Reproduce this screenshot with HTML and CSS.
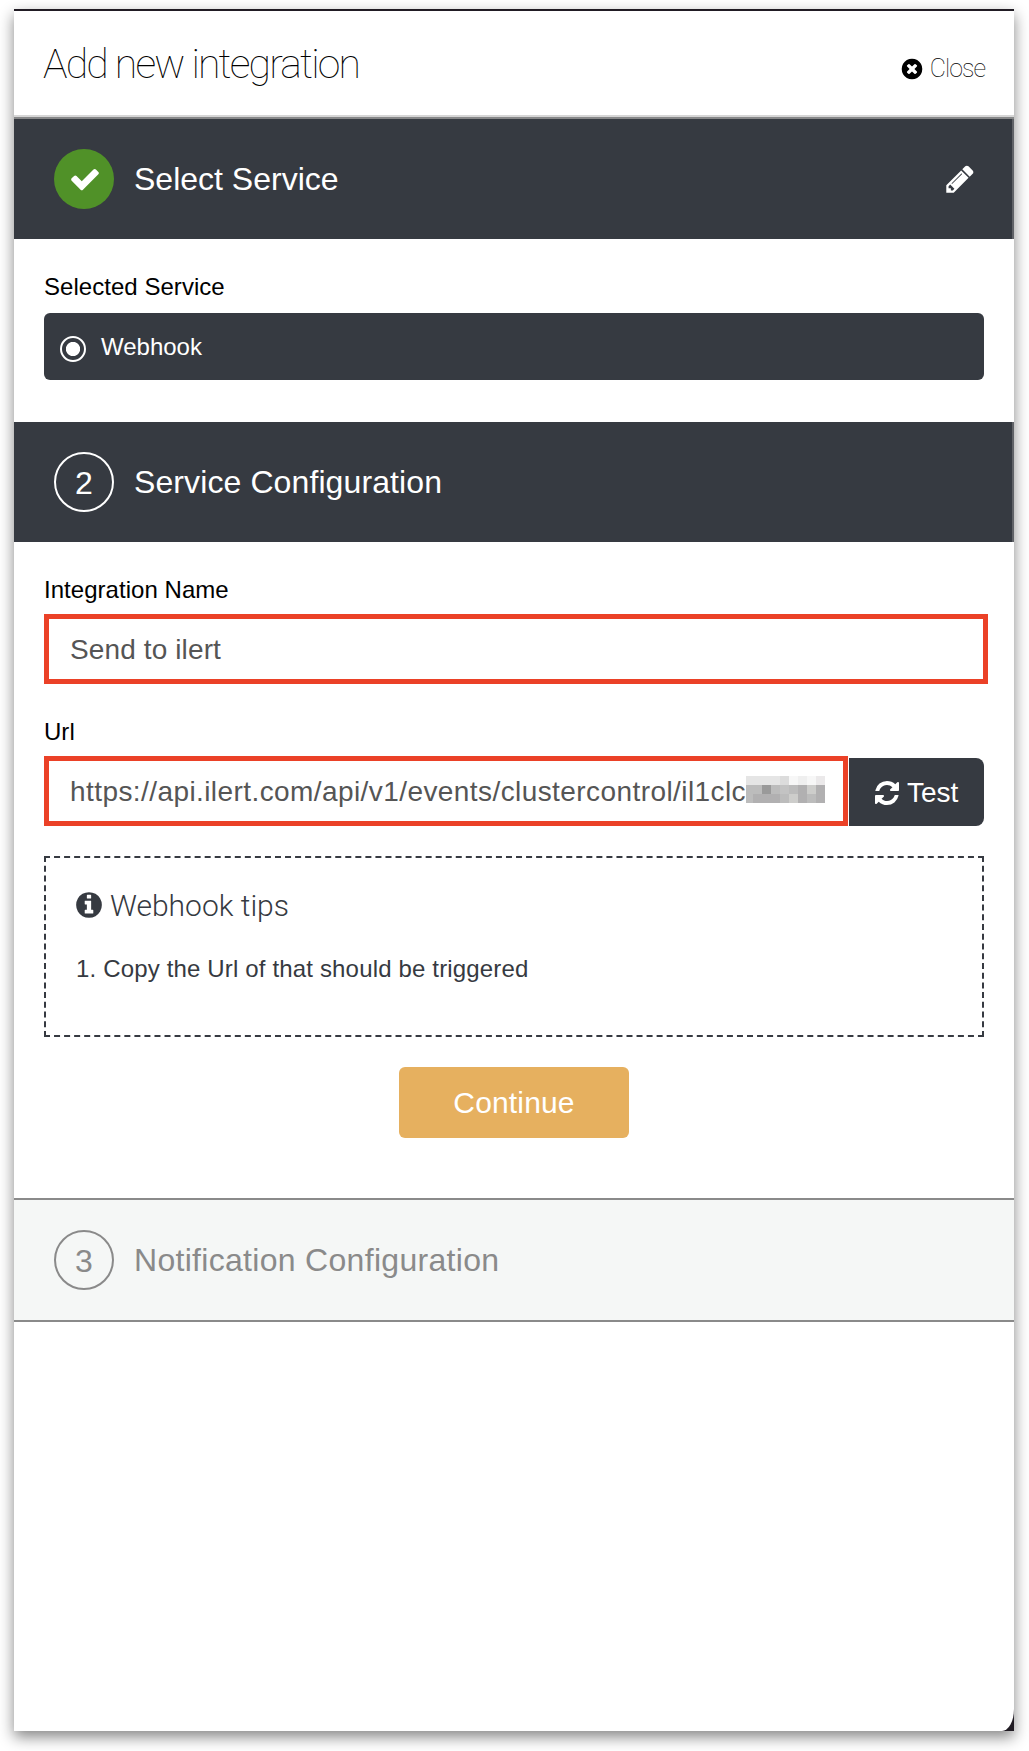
FILE: index.html
```html
<!DOCTYPE html>
<html lang="en">
<head>
<meta charset="utf-8">
<title>Add new integration</title>
<link rel="stylesheet" href="styles.css">
</head>
<body>
<main class="panel">
  <div class="sheet">
    <header class="header">
      <h1 class="title">Add new integration</h1>
      <a class="close">
        <svg class="icon-close" viewBox="0 0 1792 1792"><path d="M1277 1122q0-26-19-45l-181-181 181-181q19-19 19-45 0-27-19-46l-90-90q-19-19-46-19-26 0-45 19l-181 181-181-181q-19-19-45-19-27 0-46 19l-90 90q-19 19-19 46 0 26 19 45l181 181-181 181q-19 19-19 45 0 27 19 46l90 90q19 19 46 19 26 0 45-19l181-181 181 181q19 19 45 19 27 0 46-19l90-90q19-19 19-46zm387-226q0 209-103 385.500t-279.500 279.500-385.500 103-385.500-103-279.500-279.500-103-385.500 103-385.500 279.500-279.500 385.500-103 385.500 103 279.500 279.500 103 385.500z"/></svg>
        <span class="close-text">Close</span>
      </a>
    </header>

    <section class="step">
      <div class="badge badge-done">
        <svg class="icon-check" viewBox="0 0 1792 1792"><path d="M1671 566q0 40-28 68l-724 724-136 136q-28 28-68 28t-68-28l-136-136-362-362q-28-28-28-68t28-68l136-136q28-28 68-28t68 28l294 295 656-657q28-28 68-28t68 28l136 136q28 28 28 68z"/></svg>
      </div>
      <h2 class="step-title step-title-done">Select Service</h2>
      <svg class="icon-edit" viewBox="0 0 1792 1792"><path d="M491 1536l91-91-235-235-91 91v107h128v128h107zm523-928q0-22-22-22-10 0-17 7l-542 542q-7 7-7 17 0 22 22 22 10 0 17-7l542-542q7-7 7-17zm-54-192l416 416-832 832h-416v-416zm683 96q0 53-37 90l-166 166-416-416 166-165q36-38 90-38 53 0 91 38l235 234q37 39 37 91z"/></svg>
    </section>
    <div class="body body-service">
      <div class="label">Selected Service</div>
      <div class="service">
        <span class="radio"></span>
        <span class="service-name">Webhook</span>
      </div>
    </div>

    <section class="step">
      <div class="badge">2</div>
      <h2 class="step-title">Service Configuration</h2>
    </section>
    <div class="body body-config">
      <div class="label">Integration Name</div>
      <div class="field field-name">Send to ilert</div>
      <div class="label label-url">Url</div>
      <div class="url-row">
        <div class="field field-url">
          <span class="url-text">https://api.ilert.com/api/v1/events/clustercontrol/il1clc</span>
          <span class="mosaic">
            <i class="p1"></i><i class="p1"></i><i class="p1"></i><i class="p1"></i><i class="p2"></i><i class="p0"></i><i class="p9"></i><i class="p0"></i><i class="p8"></i>
            <i class="p4"></i><i class="p4"></i><i class="p6"></i><i class="p4"></i><i class="p3"></i><i class="p4"></i><i class="p5"></i><i class="p7"></i><i class="p5"></i>
            <i class="p4"></i><i class="p5"></i><i class="p5"></i><i class="p5"></i><i class="p4"></i><i class="p7"></i><i class="p5"></i><i class="p4"></i><i class="p5"></i>
          </span>
        </div>
        <button class="test">
          <svg class="icon-refresh" viewBox="0 0 1792 1792"><path d="M1639 1056q0 5-1 7-64 268-268 434.500t-478 166.500q-146 0-282.500-55t-243.500-157l-129 129q-19 19-45 19t-45-19-19-45v-448q0-26 19-45t45-19h448q26 0 45 19t19 45-19 45l-137 137q71 66 161 102t187 36q134 0 250-65t186-179q11-17 53-117 8-23 30-23h192q13 0 22.500 9.500t9.500 22.500zm25-800v448q0 26-19 45t-45 19h-448q-26 0-45-19t-19-45 19-45l138-138q-148-137-349-137-134 0-250 65t-186 179q-11 17-53 117-8 23-30 23h-199q-13 0-22.500-9.500t-9.500-22.500v-7q65-268 270-434.500t480-166.500q146 0 284 55.500t245 156.500l130-129q19-19 45-19t45 19 19 45z"/></svg>
          <span>Test</span>
        </button>
      </div>
      <div class="tips">
        <div class="tips-head">
          <svg class="icon-info" viewBox="0 0 1792 1792"><path d="M1152 1376v-160q0-14-9-23t-23-9h-96v-512q0-14-9-23t-23-9h-320q-14 0-23 9t-9 23v160q0 14 9 23t23 9h96v320h-96q-14 0-23 9t-9 23v160q0 14 9 23t23 9h448q14 0 23-9t9-23zm-128-896v-160q0-14-9-23t-23-9h-192q-14 0-23 9t-9 23v160q0 14 9 23t23 9h192q14 0 23-9t9-23zm640 416q0 209-103 385.500t-279.500 279.500-385.500 103-385.500-103-279.500-279.500-103-385.500 103-385.500 279.500-279.500 385.500-103 385.500 103 279.500 279.500 103 385.500z"/></svg>
          <span class="tips-title">Webhook tips</span>
        </div>
        <div class="tips-item">1. Copy the Url of that should be triggered</div>
      </div>
      <button class="continue">Continue</button>
    </div>

    <section class="step step-pending">
      <div class="badge">3</div>
      <h2 class="step-title">Notification Configuration</h2>
    </section>
  </div>
</main>
</body>
</html>
```
FILE: styles.css
```css
* {
  box-sizing: border-box;
}

body {
  margin: 0;
  padding: 9px 15px 20px 14px;
  height: 1751px;
  overflow: hidden;
  background: #fff;
  font-family: "Liberation Sans", Arial, sans-serif;
  font-size: 24px;
  color: #000;
}

svg {
  display: block;
  flex: none;
  fill: currentColor;
}

button {
  border: 0;
  padding: 0;
  font-family: inherit;
  color: #fff;
}

.panel {
  height: 1722px;
  padding-top: 2px;
  background: #211c24;
  box-shadow: 0 6px 14px rgba(0, 0, 0, 0.48);
}

.sheet {
  height: 1720px;
  background: #fff;
  border-bottom-right-radius: 12px 22px;
}

.header {
  display: flex;
  justify-content: space-between;
  height: 108px;
  padding: 0 30px 0 29px;
  border-bottom: 2px solid #878889;
  box-shadow: inset 0 -2px #d6d6d6;
}

.title {
  margin: 29px 0 0;
  font: 100 41px/48px Roboto, sans-serif;
  letter-spacing: -1.84px;
}

.close {
  display: flex;
  align-items: center;
  gap: 6px;
  height: 28px;
  margin-top: 44px;
}

.icon-close {
  width: 24px;
  height: 24px;
}

.close-text {
  margin-right: -1px;
  font: 100 25px/28px Roboto, sans-serif;
  letter-spacing: -1px;
}

.step {
  display: flex;
  align-items: center;
  height: 120px;
  padding: 0 38px 0 40px;
  background: #363a41;
  box-shadow: inset -2px 0 #606267;
  color: #fff;
}

.badge {
  display: flex;
  align-items: center;
  justify-content: center;
  width: 60px;
  height: 60px;
  margin-right: 20px;
  padding-top: 1px;
  border: 2px solid currentColor;
  border-radius: 50%;
  font-size: 32px;
  line-height: 36px;
}

.badge-done {
  padding: 0 0 0 1px;
  border: 0;
  background: #509128;
}

.icon-check {
  width: 32px;
  height: 32px;
}

.icon-edit {
  width: 32px;
  height: 32px;
}

.step-title {
  flex: 1;
  margin: 0;
  font-size: 32px;
  font-weight: 400;
  line-height: 40px;
  letter-spacing: 0.1px;
}

.step-title-done {
  letter-spacing: 0;
}

.step-pending {
  height: 124px;
  border: solid #8a8a8a;
  border-width: 2px 0;
  background: #f5f7f6;
  box-shadow: none;
  color: #8a8a8a;
}

.step-pending .step-title {
  letter-spacing: 0.3px;
}

.body {
  padding: 34px 30px 0;
}

.body-service {
  height: 183px;
}

.body-config {
  height: 656px;
}

.label {
  line-height: 28px;
  letter-spacing: 0.04px;
}

.service {
  display: flex;
  align-items: center;
  gap: 15px;
  height: 67px;
  margin-top: 12px;
  padding-left: 16px;
  border-radius: 6px;
  background: #363a41;
  color: #fff;
}

.radio {
  width: 26px;
  height: 26px;
  margin-top: 5px;
  border: 2px solid #fff;
  border-radius: 50%;
  background: radial-gradient(circle, #fff 6.700px, transparent 7.500px);
}

.field {
  display: flex;
  align-items: center;
  height: 70px;
  padding: 2px 0 0 21px;
  border: 5px solid #eb4127;
  background: #fff;
  font-size: 28px;
  line-height: 34px;
  letter-spacing: 0.12px;
  color: #555;
}

.field-name {
  width: 944px;
  margin-top: 10px;
}

.label-url {
  margin-top: 34px;
}

.url-row {
  display: flex;
  align-items: flex-end;
  justify-content: space-between;
  margin-top: 10px;
}

.field-url {
  width: 804px;
}

.url-text {
  width: 676px;
  letter-spacing: 0.42px;
  white-space: nowrap;
}

.mosaic {
  display: grid;
  grid-template-columns: 7px repeat(8, 9px);
  grid-auto-rows: 9px;
  margin-bottom: 6px;
}

.p0 { background: #f7f7f7; }
.p1 { background: #e5e5e5; }
.p2 { background: #dcdcdc; }
.p3 { background: #c3c3c3; }
.p4 { background: #bcbcbc; }
.p5 { background: #b1b0b1; }
.p6 { background: #9a9a9a; }
.p7 { background: #cdcdcb; }
.p8 { background: #ebe9ea; }
.p9 { background: #efefef; }

.test {
  display: flex;
  align-items: center;
  gap: 6px;
  width: 135px;
  height: 68px;
  padding: 1px 0 0 24px;
  border-radius: 0 8px 8px 0;
  background: #363a41;
  font-size: 28px;
  line-height: 34px;
}

.icon-refresh {
  width: 28px;
  height: 28px;
}

.tips {
  height: 181px;
  margin-top: 30px;
  padding: 29px 28px 0;
  border: 2px dashed #363a41;
  color: #363a41;
}

.tips-head {
  display: flex;
  align-items: center;
  gap: 6px;
  height: 36px;
}

.icon-info {
  width: 30px;
  height: 30px;
}

.tips-title {
  padding-top: 2px;
  font: 300 30px/36px Roboto, sans-serif;
}

.tips-item {
  margin-top: 32px;
  padding-left: 2px;
  line-height: 28px;
  letter-spacing: 0.16px;
}

.continue {
  display: block;
  width: 230px;
  height: 71px;
  margin: 30px auto 0;
  border-radius: 6px;
  background: #e6b05f;
  font-size: 30px;
  line-height: 71px;
  letter-spacing: 0.15px;
}
```
